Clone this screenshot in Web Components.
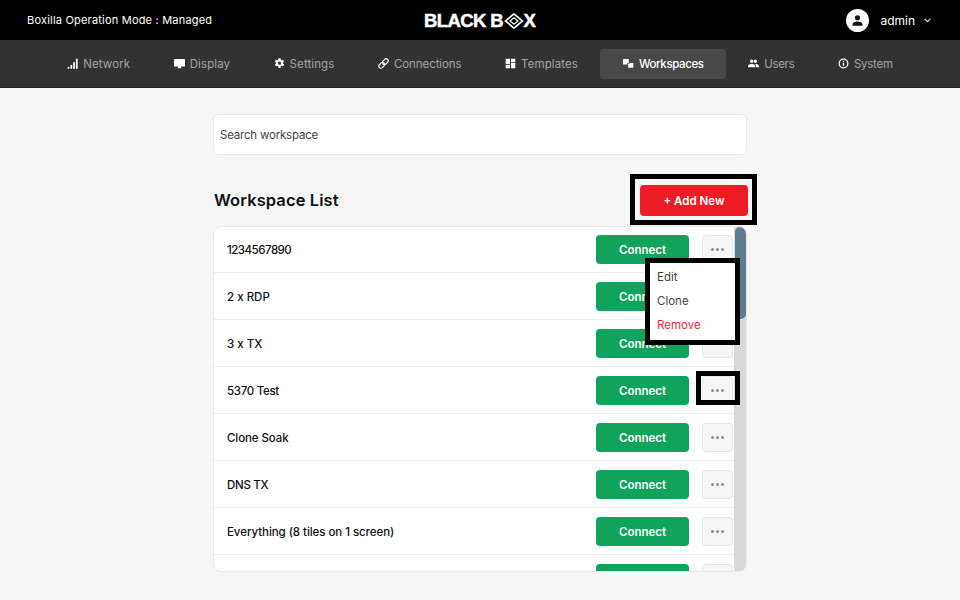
<!DOCTYPE html>
<html>
<head>
<meta charset="utf-8">
<title>Workspaces</title>
<style>
  html, body { margin: 0; height: 100%; }
  body { background: #f6f6f6; font-family: Inter, "Open Sans", sans-serif; overflow: hidden; }
</style>
</head>
<body>
<bb-topbar mode="Boxilla Operation Mode : Managed" user="admin"></bb-topbar>
<bb-nav>
  <bb-nav-item icon="network" label="Network"></bb-nav-item>
  <bb-nav-item icon="display" label="Display"></bb-nav-item>
  <bb-nav-item icon="settings" label="Settings"></bb-nav-item>
  <bb-nav-item icon="link" label="Connections" style="letter-spacing:-.08px"></bb-nav-item>
  <bb-nav-item icon="templates" label="Templates"></bb-nav-item>
  <bb-nav-item icon="workspaces" label="Workspaces" active style="letter-spacing:-.38px"></bb-nav-item>
  <bb-nav-item icon="users" label="Users" style="letter-spacing:-.3px"></bb-nav-item>
  <bb-nav-item icon="info" label="System" style="letter-spacing:-.25px"></bb-nav-item>
</bb-nav>
<bb-workspaces>
  <bb-row name="1234567890" style="letter-spacing:-.5px"></bb-row>
  <bb-row name="2 x RDP"></bb-row>
  <bb-row name="3 x TX"></bb-row>
  <bb-row name="5370 Test" marked style="letter-spacing:-.3px"></bb-row>
  <bb-row name="Clone Soak" style="letter-spacing:-.1px"></bb-row>
  <bb-row name="DNS TX" style="letter-spacing:-.3px"></bb-row>
  <bb-row name="Everything (8 tiles on 1 screen)" style="letter-spacing:-.06px"></bb-row>
  <bb-row name=""></bb-row>
</bb-workspaces>

<script>
const ICONS = {
    network: '<path d="M1 13h2.500v2.500H1zM5 10h2.500v5.500H5zM9 6h2.500v9.500H9zM13 1h2.500v14.500H13z"/>',
    display: '<path d="M15 1.500H1c-.6 0-1 .4-1 1v9c0 .6.4 1 1 1h5v1.500H5V15h6v-1.200h-1v-1.300h5c.6 0 1-.4 1-1v-9c0-.6-.4-1-1-1z"/>',
    settings: '<path d="M9.500.5h-3l-.4 2a5.600 5.600 0 0 0-1.300.8l-2-.7L1.300 5.200l1.500 1.300a5.600 5.600 0 0 0 0 1.500l-1.500 1.300 1.500 2.600 2-.7c.4.300.8.600 1.300.8l.4 2.500h3l.4-2.500c.5-.2.900-.5 1.300-.8l2 .7 1.500-2.600-1.500-1.300a5.600 5.600 0 0 0 0-1.500l1.500-1.300-1.500-2.600-2 .7a5.600 5.600 0 0 0-1.300-.8zM8 5.200a2.300 2.300 0 1 1 0 4.600 2.300 2.300 0 0 1 0-4.600z" fill-rule="evenodd"/>',
    link: '<g fill="none" stroke="currentColor" stroke-width="1.700" transform="rotate(-45 8 8)"><rect x="-.5" y="5" width="9.500" height="6" rx="3"/><rect x="7" y="5" width="9.500" height="6" rx="3"/></g>',
    templates: '<path d="M1 1h6.300v8H1zM8.700 1H15v5H8.700zM1 10.300h6.300V15H1zM8.700 7.300H15V15H8.700z"/>',
    workspaces: '<path d="M0 1.500h8.500v5.800H6.300v2H0zM7.500 8.500H9.800v-1.200H15V14H7.500z"/>',
    users: '<path d="M10.700 7.300a2.500 2.500 0 1 0 0-5 2.500 2.500 0 0 0 0 5zm-5.400 0a2.500 2.500 0 1 0 0-5 2.500 2.500 0 0 0 0 5zm0 1.500C3.500 8.800 0 9.700 0 11.500v2h10.700v-2c0-1.800-3.600-2.700-5.400-2.700zm5.400 0h-.7c1 .7 1.700 1.600 1.700 2.700v2H16v-2c0-1.800-3.500-2.700-5.300-2.700z"/>',
    info: '<path fill-rule="evenodd" d="M8 .8a7.200 7.200 0 1 0 0 14.400A7.200 7.200 0 0 0 8 .8zm0 1.700a5.500 5.500 0 1 1 0 11 5.500 5.500 0 0 1 0-11zM7.100 4.300h1.800V6H7.100zm0 2.800h1.800v4.600H7.100z"/>',
    person: '<path d="M12 4.500a3.600 3.600 0 1 1 0 7.200 3.600 3.600 0 0 1 0-7.200zM12 13.500c2.900 0 7 1.300 7 3.600v2.400H5v-2.400c0-2.300 4.100-3.600 7-3.600z"/>'
};

class BbTopbar extends HTMLElement {
    connectedCallback() {
        this.attachShadow({ mode: 'open' }).innerHTML = `
            <style>
                :host { display: flex; align-items: center; justify-content: space-between; height: 40px; background: #000; color: #fff; padding: 0 29px 0 27px; position: relative; font-size: 11px; font-weight: 400; letter-spacing: .2px; }
                .logo { position: absolute; left: 424px; top: 1px; height: 39px; display: flex; align-items: center; font: 700 18.500px "Liberation Sans", sans-serif; letter-spacing: -.6px; -webkit-text-stroke: .5px #fff; }
                .logo svg { margin: 0 -1.500px 0 0; }
                .user { display: flex; align-items: center; letter-spacing: 0; }
                .avatar { width: 23px; height: 23px; border-radius: 50%; background: #fff; display: flex; align-items: center; justify-content: center; margin-right: 11px; }
                .name { font-size: 12px; }
                .chev { margin-left: 9px; }
            </style>
            <span>${this.getAttribute('mode')}</span>
            <div class="logo">BLACK B<svg width="22" height="16" viewBox="0 0 22 16" fill="none" stroke="#fff" stroke-width="1.700"><path d="M11 .9 19.500 8 11 15.100 2.500 8z"/><path d="M11 4.800 15 8 11 11.200 7 8z" stroke-width="1.200"/></svg>X</div>
            <div class="user">
                <span class="avatar"><svg width="17" height="17" viewBox="0 0 24 24" fill="#111">${ICONS.person}</svg></span>
                <span class="name">${this.getAttribute('user')}</span>
                <svg class="chev" width="7" height="5" viewBox="0 0 7 5" fill="none" stroke="#ddd" stroke-width="1.200"><path d="M.7 .8 3.500 3.600 6.300 .8"/></svg>
            </div>`;
    }
}

class BbNav extends HTMLElement {
    connectedCallback() {
        this.attachShadow({ mode: 'open' }).innerHTML = `
            <style>
                :host { display: flex; justify-content: center; align-items: center; gap: 1.500px; height: 47px; background: #333233; border-bottom: 1px solid #222; }
            </style>
            <slot></slot>`;
    }
}

class BbNavItem extends HTMLElement {
    connectedCallback() {
        this.attachShadow({ mode: 'open' }).innerHTML = `
            <style>
                :host { display: flex; align-items: center; gap: 5px; height: 30px; padding: 0 21px; border-radius: 4px; font-size: 11.500px; color: #a3a3a3; letter-spacing: .1px; }
                :host([active]) { background: #484848; color: #fff; font-weight: 500; padding: 0 22px 0 22.500px; }
                svg { width: 11px; height: 11px; fill: #fff; color: #fff; flex: none; }
            </style>
            <svg viewBox="0 0 16 16">${ICONS[this.getAttribute('icon')]}</svg>
            <span>${this.getAttribute('label')}</span>`;
    }
}

class BbWorkspaces extends HTMLElement {
    connectedCallback() {
        this.attachShadow({ mode: 'open' }).innerHTML = `
            <style>
                :host { display: block; width: 534px; margin: 26px auto 0; color: #111; }
                .search { height: 41px; box-sizing: border-box; background: #fff; border: 1px solid #e8e8e8; border-radius: 6px; display: flex; align-items: center; padding: 0 6px; font-size: 11.500px; color: #444; letter-spacing: -.2px; }
                .head { display: flex; justify-content: space-between; align-items: center; height: 31px; margin: 30px 0 10px; }
                h2 { margin: 0 0 2px 1px; font-size: 16.500px; font-weight: 600; letter-spacing: .1px; }
                .add { position: relative; width: 108px; height: 31px; box-sizing: border-box; border-radius: 4px; background: #ee1c25; color: #fff; font-size: 11.500px; font-weight: 600; display: flex; align-items: center; justify-content: center; margin-right: -1px; }
                .add::after { content: ''; position: absolute; inset: -11px -9px -9px -10px; border: 5px solid #000; }
                .card { position: relative; height: 346px; box-sizing: border-box; background: #fff; border: 1px solid #e8e8e8; border-radius: 8px; overflow: hidden; display: flex; }
                .rows { flex: 1; min-width: 0; margin-top: -1px; }
                .bar { width: 12px; flex: none; background: #d9d9d9; }
                .thumb { height: 92px; margin-left: 1px; border-radius: 5px; background: #5f7d8f; }
                .menu { position: absolute; left: 431px; top: 31px; width: 95px; height: 87px; box-sizing: border-box; border: 5px solid #000; background: #fff; display: flex; flex-direction: column; padding: 2px 0 0 7px; font-size: 11.500px; color: #444; }
                .menu span { height: 24px; flex: none; display: flex; align-items: center; }
                .menu .danger { color: #ee2a35; }
            </style>
            <div class="search">Search workspace</div>
            <div class="head">
                <h2>Workspace List</h2>
                <div class="add">+ Add New</div>
            </div>
            <div class="card">
                <div class="rows"><slot></slot></div>
                <div class="bar"><div class="thumb"></div></div>
                <div class="menu"><span>Edit</span><span>Clone</span><span class="danger">Remove</span></div>
            </div>`;
    }
}

class BbRow extends HTMLElement {
    connectedCallback() {
        this.attachShadow({ mode: 'open' }).innerHTML = `
            <style>
                :host { display: flex; align-items: center; height: 47px; box-sizing: border-box; border-bottom: 1px solid #eee; padding: 1px 1px 0 13px; font-size: 11.500px; font-weight: 500; color: #111; }
                .name { flex: 1; }
                .connect { width: 93px; height: 29px; margin-right: 13px; border-radius: 4px; background: #10a35d; color: #fff; font-size: 11.500px; font-weight: 600; letter-spacing: 0; display: flex; align-items: center; justify-content: center; }
                .dots { position: relative; width: 31px; height: 29px; box-sizing: border-box; border: 1px solid #e6e6e6; border-radius: 4px; background: #f6f6f6; display: flex; align-items: center; justify-content: center; gap: 2px; }
                .dots i { width: 3px; height: 3px; border-radius: 50%; background: #8f8f8f; }
                :host([marked]) .dots::after { content: ''; position: absolute; inset: -6px -8px -1px -7px; border: 5px solid #000; }
            </style>
            <span class="name">${this.getAttribute('name')}</span>
            <div class="connect">Connect</div>
            <div class="dots"><i></i><i></i><i></i></div>`;
    }
}

customElements.define('bb-topbar', BbTopbar);
customElements.define('bb-nav', BbNav);
customElements.define('bb-nav-item', BbNavItem);
customElements.define('bb-workspaces', BbWorkspaces);
customElements.define('bb-row', BbRow);
</script>
</body>
</html>
